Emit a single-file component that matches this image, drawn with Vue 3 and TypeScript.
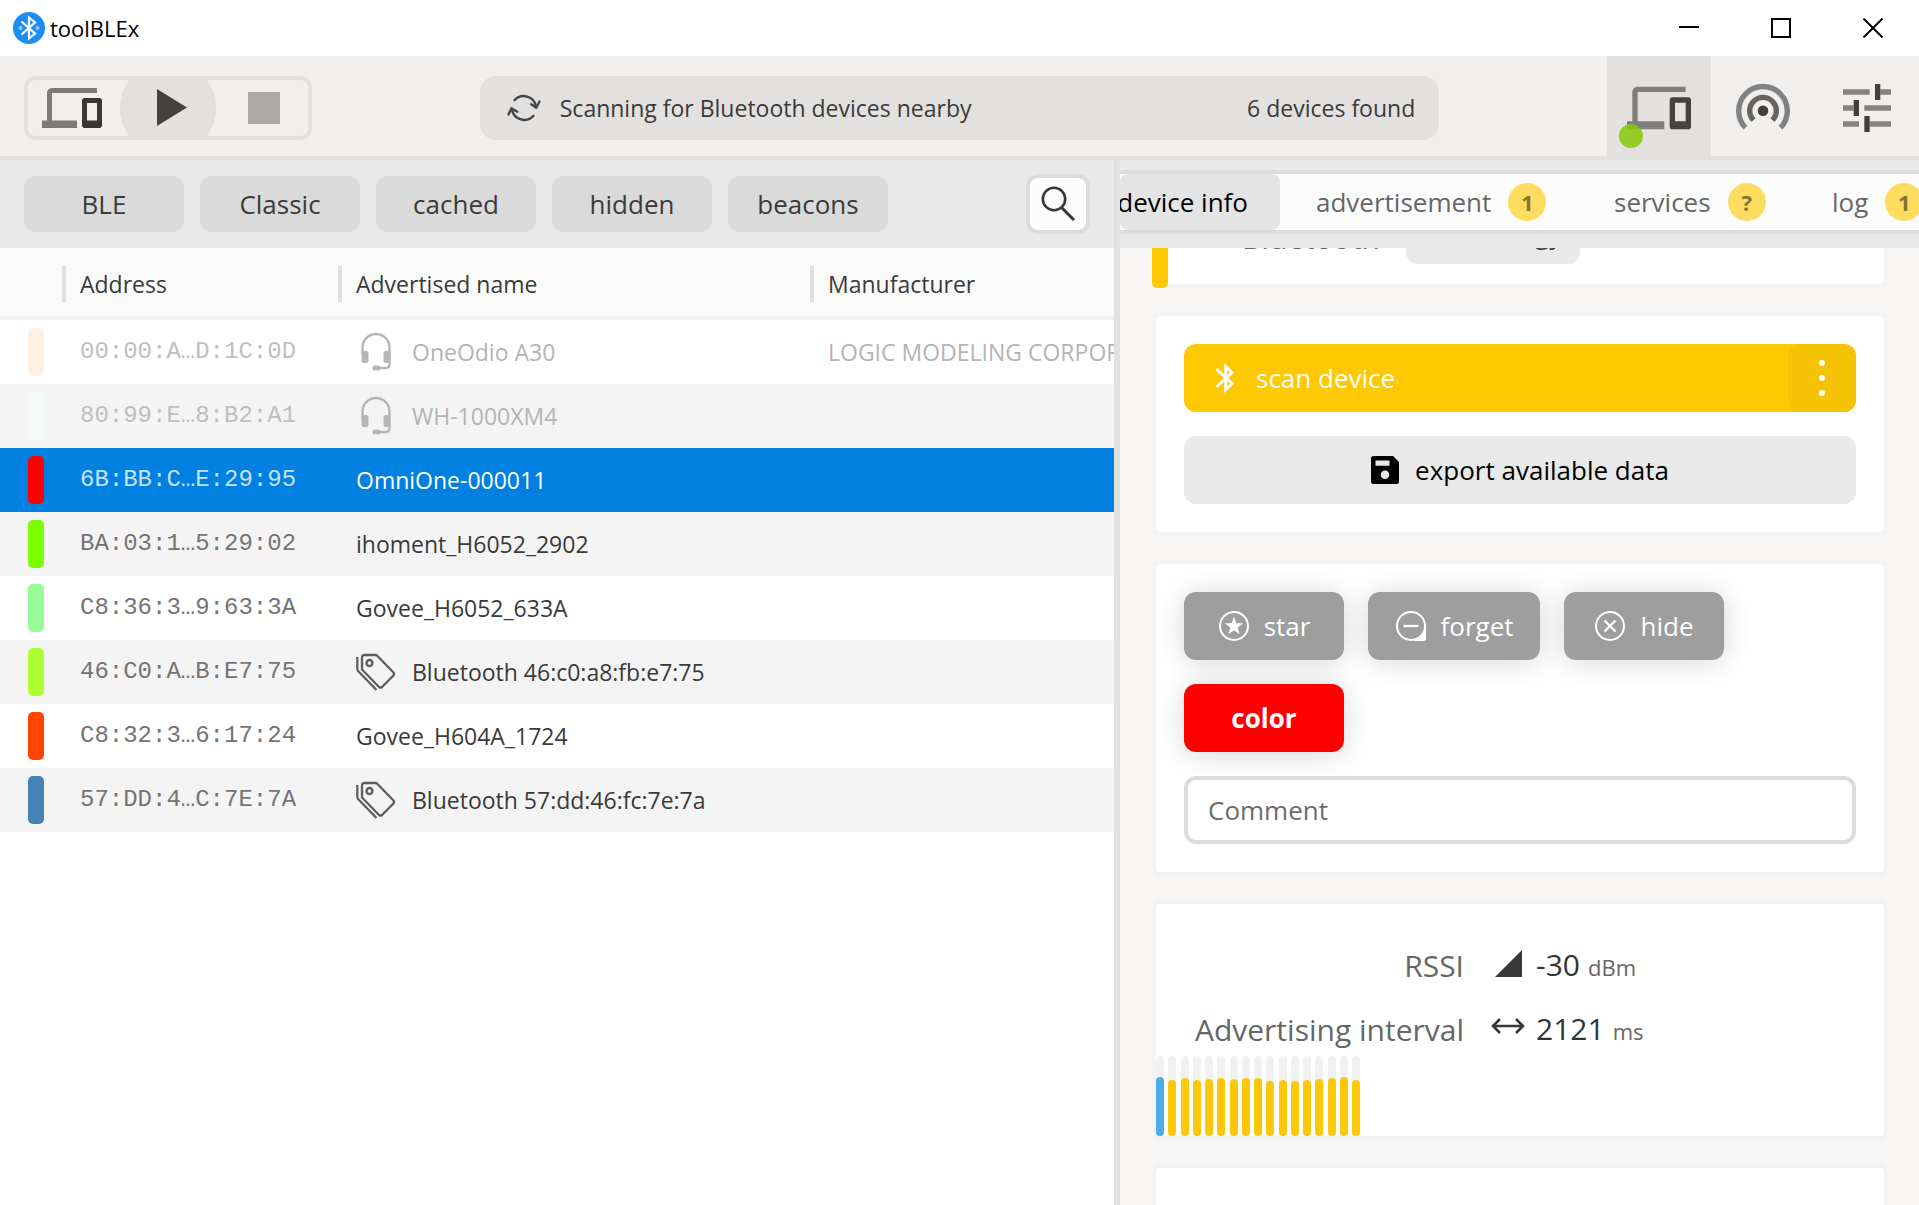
<script setup lang="ts">
import { ref } from 'vue'

interface Device {
  color: string
  address: string
  name: string
  icon?: 'headset' | 'tags'
  manufacturer?: string
  cached?: boolean
}

interface Tab {
  id: string
  label: string
  badge?: string
}

const filters: string[] = ['BLE', 'Classic', 'cached', 'hidden', 'beacons']

const devices: Device[] = [
  { color: '#fff0e4', address: '00:00:A…D:1C:0D', name: 'OneOdio A30', icon: 'headset', manufacturer: 'LOGIC MODELING CORPORATION', cached: true },
  { color: '#f4faf9', address: '80:99:E…8:B2:A1', name: 'WH-1000XM4', icon: 'headset', cached: true },
  { color: '#ff0000', address: '6B:BB:C…E:29:95', name: 'OmniOne-000011' },
  { color: '#7cfc00', address: 'BA:03:1…5:29:02', name: 'ihoment_H6052_2902' },
  { color: '#98fb98', address: 'C8:36:3…9:63:3A', name: 'Govee_H6052_633A' },
  { color: '#adff2f', address: '46:C0:A…B:E7:75', name: 'Bluetooth 46:c0:a8:fb:e7:75', icon: 'tags' },
  { color: '#ff4500', address: 'C8:32:3…6:17:24', name: 'Govee_H604A_1724' },
  { color: '#4682b4', address: '57:DD:4…C:7E:7A', name: 'Bluetooth 57:dd:46:fc:7e:7a', icon: 'tags' },
]
const selected = ref<number>(2)

const tabs: Tab[] = [
  { id: 'info', label: 'device info' },
  { id: 'advertisement', label: 'advertisement', badge: '1' },
  { id: 'services', label: 'services', badge: '?' },
  { id: 'log', label: 'log', badge: '1' },
]
const activeTab = ref<string>('info')

const comment = ref<string>('')

const samples: number[] = [59, 56, 58, 56, 57, 58, 57, 58, 58, 55, 56, 55, 56, 57, 58, 59, 56]
</script>

<template>
  <div class="window">
    <header class="titlebar">
      <svg class="logo" viewBox="0 0 32 32" aria-hidden="true">
        <circle cx="16" cy="16" r="16" fill="#1e8cf5" />
        <path d="M8.500 9.500L22 21.500L16 26.500V5.500L22 10.500L8.500 22.500" fill="none" stroke="#fff" stroke-width="2.200" />
        <circle cx="7.500" cy="16" r="2" fill="#8fc8fb" />
        <circle cx="24.500" cy="16" r="2" fill="#8fc8fb" />
      </svg>
      <h1 class="title">toolBLEx</h1>
      <div class="window-buttons">
        <button type="button" aria-label="Minimize">
          <svg viewBox="0 0 20 20"><path d="M0 9H20" /></svg>
        </button>
        <button type="button" aria-label="Maximize">
          <svg viewBox="0 0 20 20"><path d="M1 1H19V19H1Z" /></svg>
        </button>
        <button type="button" aria-label="Close">
          <svg viewBox="0 0 20 20"><path d="M0.500 0.500L19.500 19.500M19.500 0.500L0.500 19.500" /></svg>
        </button>
      </div>
    </header>

    <div class="toolbar">
      <div class="scan-group">
        <button type="button" aria-label="Devices">
          <svg class="icon-60" viewBox="0 0 24 24">
            <path fill="#7b7a79" d="M4 6h18V4H4c-1.100 0-2 .9-2 2v11H0v3h14v-3H4V6z" />
            <path fill="#383736" d="M23 8h-6c-.55 0-1 .45-1 1v10c0 .55.45 1 1 1h6c.55 0 1-.45 1-1V9c0-.55-.45-1-1-1zm-1 9h-4v-7h4v7z" />
          </svg>
        </button>
        <button type="button" class="play" aria-label="Start scanning">
          <svg class="icon-60" viewBox="0 0 60 60"><path fill="#434241" d="M19 11V48L49 29.500Z" /></svg>
        </button>
        <button type="button" aria-label="Stop scanning">
          <svg class="icon-60" viewBox="0 0 60 60"><path fill="#abaaa9" d="M14 14H46V46H14Z" /></svg>
        </button>
      </div>

      <div class="status">
        <svg class="sync" viewBox="0 0 34 34" aria-hidden="true">
          <g fill="none" stroke="#444" stroke-width="2.400" stroke-linecap="round" stroke-linejoin="round">
            <path d="M7.500 9.200A12.500 12.500 0 0 1 29 15.200" />
            <path d="M24.200 13.200L29.200 16.700L32.500 10.500" />
            <path d="M26.500 24.800A12.500 12.500 0 0 1 5 18.800" />
            <path d="M1.500 23.500L4.500 17.200L10.300 20.700" />
          </g>
        </svg>
        <span class="status-text">Scanning for Bluetooth devices nearby</span>
        <span>6 devices found</span>
      </div>

      <nav class="views">
        <button type="button" class="view active" aria-label="Device scanner">
          <svg class="icon-64" viewBox="0 0 24 24">
            <path fill="#7f7e7d" d="M4 6h18V4H4c-1.100 0-2 .9-2 2v11H0v3h14v-3H4V6z" />
            <path fill="#444342" d="M23 8h-6c-.55 0-1 .45-1 1v10c0 .55.45 1 1 1h6c.55 0 1-.45 1-1V9c0-.55-.45-1-1-1zm-1 9h-4v-7h4v7z" />
          </svg>
          <span class="online-dot"></span>
        </button>
        <button type="button" class="view" aria-label="Advertiser">
          <svg class="icon-64" viewBox="0 0 64 64">
            <path fill="none" stroke="#828181" stroke-width="5.400" d="M14.500 51.700A24.300 24.300 0 1 1 49.500 51.700" />
            <path fill="none" stroke="#656463" stroke-width="5.400" d="M22.600 44.100A13.300 13.300 0 1 1 41.400 44.100" />
            <circle cx="32" cy="34.700" r="5.300" fill="#403f3e" />
          </svg>
        </button>
        <button type="button" class="view" aria-label="Settings">
          <svg class="icon-64" viewBox="0 0 24 24">
            <path fill="#838281" d="M3 5h10v2H3zM17 5h4v2h-4zM3 11h4v2H3zM11 11h10v2H11zM3 17h6v2H3zM13 17h8v2h-8z" />
            <path fill="#403f3e" d="M15 3h2v6h-2zM7 9h2v6H7zM11 15h2v6h-2z" />
          </svg>
        </button>
      </nav>
    </div>

    <main class="panes">
      <section class="list-pane">
        <div class="filters">
          <button v-for="filter in filters" :key="filter" type="button" class="filter">{{ filter }}</button>
          <button type="button" class="search" aria-label="Search">
            <svg viewBox="0 0 40 40" fill="none" stroke="#383838" stroke-width="2.600">
              <circle cx="16" cy="15" r="11.200" />
              <path d="M23.500 23.500L36 36" stroke-width="3" />
            </svg>
          </button>
        </div>

        <table class="devices">
          <colgroup>
            <col class="col-color" />
            <col class="col-address" />
            <col class="col-name" />
            <col />
          </colgroup>
          <thead>
            <tr>
              <th aria-label="Color"></th>
              <th><span class="head">Address</span></th>
              <th><span class="head">Advertised name</span></th>
              <th><span class="head">Manufacturer</span></th>
            </tr>
          </thead>
          <tbody>
            <tr
              v-for="(device, index) in devices"
              :key="device.address"
              :class="{ cached: device.cached, selected: index === selected }"
              @click="selected = index"
            >
              <td><span class="swatch" :style="{ background: device.color }"></span></td>
              <td class="address">{{ device.address }}</td>
              <td>
                <span class="name">
                  <svg v-if="device.icon === 'headset'" class="kind" viewBox="0 0 40 40" aria-hidden="true">
                    <path d="M6.500 22V15.500A13.500 13.500 0 0 1 33.500 15.500V32.500Q33.500 36 29.500 36H22" fill="none" stroke="#b6b6b6" stroke-width="2.400" />
                    <rect x="5.500" y="19" width="7" height="12" rx="2.500" fill="#b6b6b6" />
                    <rect x="27.500" y="19" width="7" height="12" rx="2.500" fill="#b6b6b6" />
                    <rect x="16.500" y="33.500" width="8" height="5" rx="2.500" fill="#b6b6b6" />
                  </svg>
                  <svg v-else-if="device.icon === 'tags'" class="kind" viewBox="0 0 40 40" aria-hidden="true">
                    <g fill="none" stroke="#5e5e5e" stroke-width="2.300" stroke-linejoin="round">
                      <path d="M6 5.500Q6 3 8.500 3H20.500L37.500 20.500Q38.600 22 37.500 23.500L26 35Q24.500 36.200 23 35L6 17.500Z" />
                      <circle cx="13.500" cy="11" r="3" />
                      <path d="M1.300 5V16.500Q1.300 18.500 3 20L20.500 38" />
                    </g>
                  </svg>
                  {{ device.name }}
                </span>
              </td>
              <td>{{ device.manufacturer }}</td>
            </tr>
          </tbody>
        </table>
      </section>

      <div class="splitter"></div>

      <section class="detail-pane">
        <div class="tabbar">
          <nav class="tabs">
            <button
              v-for="tab in tabs"
              :key="tab.id"
              type="button"
              :class="['tab', 'tab-' + tab.id, { active: tab.id === activeTab }]"
              @click="activeTab = tab.id"
            >
              {{ tab.label }}
              <span v-if="tab.badge" class="badge">{{ tab.badge }}</span>
            </button>
          </nav>
        </div>

        <div class="cards">
          <article class="card summary">
            <span class="accent"></span>
            <span class="summary-label">Bluetooth</span>
            <span class="chip">Low Energy</span>
          </article>

          <article class="card actions">
            <div class="split-button">
              <button type="button" class="scan">
                <svg class="bt" viewBox="0 0 20 30" aria-hidden="true">
                  <path d="M1.500 6L17 20.500L10.700 26.500V3.500L17 9.500L1.500 24" fill="none" stroke="currentColor" stroke-width="3" />
                </svg>
                scan device
              </button>
              <button type="button" class="more" aria-label="More actions">
                <svg viewBox="0 0 8 36" fill="currentColor">
                  <circle cx="4" cy="3" r="3" />
                  <circle cx="4" cy="18" r="3" />
                  <circle cx="4" cy="33" r="3" />
                </svg>
              </button>
            </div>
            <button type="button" class="export">
              <svg class="save" viewBox="0 0 28 28" aria-hidden="true">
                <path fill-rule="evenodd" d="M2.500 0H22L28 6V25.500Q28 28 25.500 28H2.500Q0 28 0 25.500V2.500Q0 0 2.500 0ZM4.500 4.500V9.800H18.500V4.500ZM14 14.500A4.300 4.300 0 1 0 14 23.100A4.300 4.300 0 1 0 14 14.500Z" />
              </svg>
              export available data
            </button>
          </article>

          <article class="card marks">
            <div class="mark-buttons">
              <button type="button" class="mark">
                <svg viewBox="0 0 32 32" aria-hidden="true">
                  <circle cx="16" cy="16" r="14" fill="none" stroke="#fff" stroke-width="2" />
                  <path fill="#fff" d="M16 6.500L18.300 13.200H25.200L19.700 17.400L21.700 24.200L16 20.200L10.300 24.200L12.300 17.400L6.800 13.200H13.700Z" />
                </svg>
                star
              </button>
              <button type="button" class="mark wide">
                <svg viewBox="0 0 32 32" aria-hidden="true">
                  <circle cx="16" cy="16" r="14" fill="none" stroke="#fff" stroke-width="2" />
                  <path fill="#fff" d="M31 16V29Q31 31 29 31H16Q24 30 27.500 25Q30.500 21 31 16Z" />
                  <path stroke="#fff" stroke-width="2.300" d="M8.500 16H23.500" />
                </svg>
                forget
              </button>
              <button type="button" class="mark">
                <svg viewBox="0 0 32 32" aria-hidden="true">
                  <circle cx="16" cy="16" r="14" fill="none" stroke="#fff" stroke-width="2" />
                  <path fill="none" stroke="#fff" stroke-width="2.300" d="M10.500 10.500L21.500 21.500M21.500 10.500L10.500 21.500" />
                </svg>
                hide
              </button>
              <button type="button" class="mark color">color</button>
            </div>
            <input v-model="comment" class="comment" type="text" placeholder="Comment" aria-label="Comment" />
          </article>

          <article class="card signal">
            <dl class="metrics">
              <div class="metric">
                <dt>RSSI</dt>
                <dd>
                  <svg viewBox="0 0 34 34" aria-hidden="true"><path d="M4 28H31V1Z" fill="#383838" /></svg>
                  -30 <small>dBm</small>
                </dd>
              </div>
              <div class="metric">
                <dt>Advertising interval</dt>
                <dd>
                  <svg viewBox="0 0 34 34" aria-hidden="true">
                    <path d="M2 13H32M9 6L2 13L9 20M25 6L32 13L25 20" fill="none" stroke="#383838" stroke-width="2.600" />
                  </svg>
                  2121 <small>ms</small>
                </dd>
              </div>
            </dl>
            <div class="chart">
              <span v-for="(sample, index) in samples" :key="index" class="bar">
                <span class="fill" :style="{ height: sample + 'px' }"></span>
              </span>
            </div>
          </article>

          <article class="card next"></article>
        </div>
      </section>
    </main>
  </div>
</template>

<style>
body {
  margin: 0;
  overflow: hidden;
}
</style>

<style scoped>
.window {
  display: flex;
  flex-direction: column;
  height: 100vh;
  overflow: hidden;
  background: #fff;
  color: #3a3a3a;
  font-family: "Open Sans", "Noto Sans", sans-serif;
  font-size: 23px;
  line-height: 32px;
}

button,
input {
  box-sizing: border-box;
  margin: 0;
  padding: 0;
  border: 0;
  background: none;
  color: inherit;
  font: inherit;
}

svg {
  display: block;
  flex: none;
}

/* Title bar */
.titlebar {
  display: flex;
  align-items: center;
  flex: none;
  height: 56px;
  padding-left: 13px;
  background: #fff;
}

.logo {
  width: 32px;
  height: 32px;
}

.title {
  flex: 1;
  margin: 0 0 0 5px;
  color: #000;
  font-size: 22px;
  font-weight: 400;
}

.window-buttons {
  display: flex;
  align-self: stretch;
}

.window-buttons button {
  display: flex;
  align-items: center;
  justify-content: center;
  width: 92px;
}

.window-buttons svg {
  width: 20px;
  height: 20px;
  fill: none;
  stroke: #000;
  stroke-width: 2;
}

/* Toolbar */
.toolbar {
  display: grid;
  grid-template-columns: 1fr 50% 1fr;
  align-items: end;
  flex: none;
  height: 100px;
  border-bottom: 4px solid #e2e1df;
  background: #f0efee;
}

.scan-group {
  display: flex;
  justify-self: start;
  box-sizing: border-box;
  width: 288px;
  height: 64px;
  margin: 0 0 16px 24px;
  overflow: hidden;
  border: 4px solid #e2e1df;
  border-radius: 12px;
}

.scan-group button {
  display: flex;
  flex: 1;
  align-items: center;
  justify-content: center;
}

.scan-group button:first-child {
  padding-right: 4px;
}

.scan-group button:last-child {
  padding-left: 4px;
}

.scan-group .play {
  flex: 0 0 96px;
  height: 96px;
  align-self: center;
  border-radius: 50%;
  background: #e2e1df;
}

.icon-60 {
  width: 60px;
  height: 60px;
}

.icon-64 {
  width: 64px;
  height: 64px;
}

.status {
  display: flex;
  align-items: center;
  height: 64px;
  margin-bottom: 16px;
  padding: 0 24px 0 27px;
  border-radius: 16px;
  background: #e2e1df;
  box-sizing: border-box;
}

.sync {
  width: 34px;
  height: 34px;
}

.status-text {
  flex: 1;
  margin-left: 19px;
}

.views {
  display: flex;
  justify-content: flex-end;
}

.view {
  position: relative;
  display: flex;
  align-items: center;
  justify-content: center;
  width: 104px;
  height: 100px;
  padding-top: 4px;
}

.view.active {
  background: #e2e1df;
}

.online-dot {
  position: absolute;
  bottom: 8px;
  left: 12px;
  width: 24px;
  height: 24px;
  border-radius: 50%;
  background: rgba(136, 202, 14, 0.88);
}

/* Panes */
.panes {
  display: grid;
  flex: 1;
  grid-template-columns: minmax(0, 1114fr) 6px minmax(0, 799fr);
  min-height: 0;
}

.splitter {
  background: #e2e1df;
}

.list-pane {
  min-width: 0;
  overflow: hidden;
}

.filters {
  display: flex;
  align-items: center;
  gap: 16px;
  height: 88px;
  padding: 0 24px;
  background: #e9e9e9;
}

.filter {
  width: 160px;
  height: 56px;
  border-radius: 12px;
  background: #dadada;
  font-size: 26px;
}

.search {
  display: flex;
  align-items: center;
  justify-content: center;
  width: 64px;
  height: 60px;
  margin-left: auto;
  border: 4px solid #dcdcdc;
  border-radius: 12px;
  background: #fcfcfc;
}

.search svg {
  width: 40px;
  height: 40px;
}

.devices {
  width: 100%;
  border-spacing: 0;
  table-layout: fixed;
}

.col-color {
  width: 62px;
}

.col-address {
  width: 276px;
}

.col-name {
  width: 472px;
}

.devices th {
  height: 64px;
  padding: 4px 0 0;
  border-bottom: 4px solid #f0f0f0;
  background: #fafafa;
  font-weight: 400;
  text-align: left;
}

.head {
  display: block;
  padding-left: 14px;
  border-left: 4px solid #e0e0e0;
  line-height: 36px;
}

.devices td {
  height: 64px;
  padding: 0 0 0 18px;
  overflow: hidden;
  white-space: nowrap;
}

.devices td:first-child {
  padding-left: 28px;
}

.devices tbody tr:nth-child(even) {
  background: #f4f4f4;
}

.devices .address {
  color: #747474;
  font-family: "Liberation Mono", monospace;
  font-size: 24px;
}

.devices .cached {
  color: #b4b4b4;
}

.devices .cached .address {
  color: #bebebe;
}

.devices tbody .selected {
  background: #0080e0;
  color: #fff;
}

.devices .selected .address {
  color: #c4e2fa;
}

.swatch {
  display: block;
  width: 16px;
  height: 48px;
  border-radius: 5px;
}

.name {
  display: flex;
  align-items: center;
  gap: 16px;
}

.kind {
  width: 40px;
  height: 40px;
}

/* Detail pane */
.detail-pane {
  display: flex;
  flex-direction: column;
  min-width: 0;
  overflow: hidden;
  background: #f8f7f5;
}

.tabbar {
  flex: none;
  padding: 10px 0 14px;
  background: #e9e9e9;
}

.tabs {
  display: flex;
  height: 56px;
  overflow: hidden;
  border-top: 4px solid #dcdcdc;
  border-bottom: 4px solid #dcdcdc;
  background: #fcfcfc;
}

.tab {
  display: flex;
  flex: none;
  align-items: center;
  gap: 17px;
  padding-left: 34px;
  color: #666;
  font-size: 26px;
  white-space: nowrap;
}

.tab.active {
  border-radius: 8px;
  background: #e4e4e4;
  color: #000;
}

.tab-info {
  justify-content: flex-end;
  width: 160px;
  padding: 0 32px 0 0;
  overflow: hidden;
}

.tab-advertisement {
  width: 300px;
  padding-left: 36px;
}

.tab-services {
  width: 218px;
}

.badge {
  width: 38px;
  height: 38px;
  border-radius: 50%;
  background: #fddc60;
  color: #857330;
  font-size: 22px;
  font-weight: 700;
  line-height: 38px;
  text-align: center;
}

.cards {
  display: flex;
  flex: 1;
  flex-direction: column;
  gap: 24px;
  min-height: 0;
  padding: 0 31px 0 32px;
  overflow: hidden;
}

.card {
  flex: none;
  border: 4px solid #f3f3f3;
  border-radius: 8px;
  background: #fff;
}

.summary {
  position: relative;
  display: flex;
  align-items: flex-end;
  height: 36px;
  border-top: 0;
  border-radius: 0 0 8px 8px;
}

.accent {
  position: absolute;
  bottom: -4px;
  left: -4px;
  width: 16px;
  height: 40px;
  border-radius: 0 0 5px 5px;
  background: #fec902;
}

.summary-label {
  width: 224px;
  margin: 0 26px 30px 0;
  color: #666;
  font-size: 30px;
  text-align: right;
}

.chip {
  width: 174px;
  margin-bottom: 20px;
  border-radius: 12px;
  background: #e9e9e9;
  font-size: 26px;
  line-height: 60px;
  text-align: center;
}

.actions {
  display: flex;
  flex-direction: column;
  gap: 24px;
  padding: 28px;
  font-size: 26px;
}

.split-button {
  display: flex;
  height: 68px;
  border-radius: 12px;
  background: #fec902;
  color: #fff;
}

.scan {
  display: flex;
  flex: 1;
  align-items: center;
  gap: 21px;
  padding-left: 31px;
}

.bt {
  width: 20px;
  height: 30px;
}

.more {
  display: flex;
  align-items: center;
  justify-content: center;
  width: 68px;
  border-radius: 12px;
  background: #f6c304;
}

.more svg {
  width: 8px;
  height: 36px;
}

.export {
  display: flex;
  align-items: center;
  justify-content: center;
  gap: 16px;
  height: 68px;
  border-radius: 12px;
  background: #e9e9e9;
  color: #000;
}

.save {
  width: 28px;
  height: 28px;
}

.marks {
  display: flex;
  flex-direction: column;
  gap: 24px;
  padding: 28px;
  font-size: 26px;
}

.mark-buttons {
  display: flex;
  flex-wrap: wrap;
  gap: 24px;
}

.mark {
  display: flex;
  align-items: center;
  justify-content: center;
  gap: 14px;
  width: 160px;
  height: 68px;
  border-radius: 12px;
  background: #9e9e9e;
  box-shadow: 0 2px 28px rgba(0, 0, 0, 0.16);
  color: #fff;
}

.mark svg {
  width: 32px;
  height: 32px;
}

.mark.wide {
  width: 172px;
}

.mark.color {
  background: #f00;
  font-weight: 700;
}

.comment {
  width: 100%;
  height: 68px;
  padding: 0 20px;
  border: 4px solid #dcdcdc;
  border-radius: 12px;
  background: #fff;
}

.comment::placeholder {
  color: #6c6c6c;
  opacity: 1;
}

.metrics {
  height: 122px;
  margin: 0;
  padding-top: 30px;
  font-size: 30px;
}

.metric {
  display: grid;
  grid-template-columns: 308px 1fr;
  height: 64px;
  align-items: center;
}

.metric dt {
  color: #666;
  text-align: right;
}

.metric dd {
  display: flex;
  align-items: baseline;
  gap: 8px;
  margin: 0 0 0 27px;
  color: #333;
}

.metric dd svg {
  width: 34px;
  height: 34px;
  margin-right: 3px;
  align-self: center;
}

.metric small {
  color: #666;
  font-size: 22px;
}

.chart {
  display: flex;
  justify-content: space-between;
  width: 204px;
  height: 80px;
}

.bar {
  display: flex;
  align-items: flex-end;
  width: 8px;
  border-radius: 4px;
  background: #f2f1f1;
}

.fill {
  width: 8px;
  border-radius: 4px;
  background: #fec80a;
}

.bar:first-child .fill {
  background: #4dabe6;
}

.next {
  height: 240px;
}
</style>
